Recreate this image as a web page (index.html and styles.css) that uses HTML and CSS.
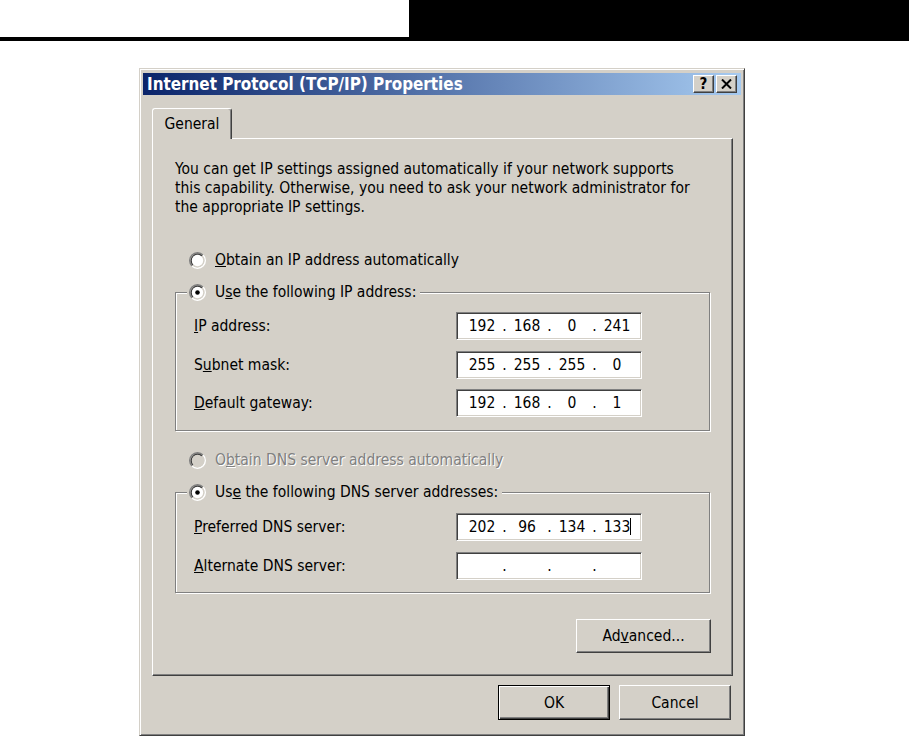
FILE: index.html
```html
<!DOCTYPE html>
<html>
<head>
<meta charset="utf-8">
<link rel="stylesheet" href="styles.css">
</head>
<body>
<div class="doc-header"><div class="doc-header-left"></div><div class="doc-header-right"></div></div>
<div class="dialog">
  <div class="titlebar">
    <span class="title">Internet Protocol (TCP/IP) Properties</span>
    <div class="caption-btns">
      <span class="cbtn help">?</span>
      <span class="cbtn close"><svg width="11" height="10" viewBox="0 0 11 10"><path d="M1 0.5L10 9.5M10 0.5L1 9.5" stroke="#000" stroke-width="2" fill="none"/></svg></span>
    </div>
  </div>
  <div class="tabs"><div class="tab">General</div></div>
  <div class="panel">
    <p class="intro">You can get IP settings assigned automatically if your network supports<br>this capability. Otherwise, you need to ask your network administrator for<br>the appropriate IP settings.</p>

    <div class="radio-row">
      <svg class="radio" viewBox="0 0 12 12"><path d="M2.11 9.89A5.5 5.5 0 0 1 9.89 2.11" fill="none" stroke="#808080"/><path d="M9.89 2.11A5.5 5.5 0 0 1 2.11 9.89" fill="none" stroke="#fff"/><path d="M2.82 9.18A4.5 4.5 0 0 1 9.18 2.82" fill="none" stroke="#404040"/><path d="M9.18 2.82A4.5 4.5 0 0 1 2.82 9.18" fill="none" stroke="#d4d0c8"/><circle cx="6" cy="6" r="4" fill="#fff"/></svg>
      <span><u>O</u>btain an IP address automatically</span>
    </div>

    <fieldset class="group group-ip">
      <legend><span class="legend-inner">
        <svg class="radio" viewBox="0 0 12 12"><path d="M2.11 9.89A5.5 5.5 0 0 1 9.89 2.11" fill="none" stroke="#808080"/><path d="M9.89 2.11A5.5 5.5 0 0 1 2.11 9.89" fill="none" stroke="#fff"/><path d="M2.82 9.18A4.5 4.5 0 0 1 9.18 2.82" fill="none" stroke="#404040"/><path d="M9.18 2.82A4.5 4.5 0 0 1 2.82 9.18" fill="none" stroke="#d4d0c8"/><circle cx="6" cy="6" r="4" fill="#fff"/><circle cx="6" cy="6" r="1.6" fill="#000"/></svg>
        <span>U<u>s</u>e the following IP address:</span>
      </span></legend>
      <div class="field-row">
        <span class="lbl"><u>I</u>P address:</span>
        <div class="ip"><span class="oct">192</span><span class="dot">.</span><span class="oct">168</span><span class="dot">.</span><span class="oct">0</span><span class="dot">.</span><span class="oct">241</span></div>
      </div>
      <div class="field-row">
        <span class="lbl">S<u>u</u>bnet mask:</span>
        <div class="ip"><span class="oct">255</span><span class="dot">.</span><span class="oct">255</span><span class="dot">.</span><span class="oct">255</span><span class="dot">.</span><span class="oct">0</span></div>
      </div>
      <div class="field-row">
        <span class="lbl"><u>D</u>efault gateway:</span>
        <div class="ip"><span class="oct">192</span><span class="dot">.</span><span class="oct">168</span><span class="dot">.</span><span class="oct">0</span><span class="dot">.</span><span class="oct">1</span></div>
      </div>
    </fieldset>

    <div class="radio-row radio-row-dns">
      <svg class="radio" viewBox="0 0 12 12"><path d="M2.11 9.89A5.5 5.5 0 0 1 9.89 2.11" fill="none" stroke="#808080"/><path d="M9.89 2.11A5.5 5.5 0 0 1 2.11 9.89" fill="none" stroke="#fff"/><path d="M2.82 9.18A4.5 4.5 0 0 1 9.18 2.82" fill="none" stroke="#404040"/><path d="M9.18 2.82A4.5 4.5 0 0 1 2.82 9.18" fill="none" stroke="#d4d0c8"/><circle cx="6" cy="6" r="4" fill="#d4d0c8"/></svg>
      <span class="disabled-text">O<u>b</u>tain DNS server address automatically</span>
    </div>

    <fieldset class="group group-dns">
      <legend><span class="legend-inner">
        <svg class="radio" viewBox="0 0 12 12"><path d="M2.11 9.89A5.5 5.5 0 0 1 9.89 2.11" fill="none" stroke="#808080"/><path d="M9.89 2.11A5.5 5.5 0 0 1 2.11 9.89" fill="none" stroke="#fff"/><path d="M2.82 9.18A4.5 4.5 0 0 1 9.18 2.82" fill="none" stroke="#404040"/><path d="M9.18 2.82A4.5 4.5 0 0 1 2.82 9.18" fill="none" stroke="#d4d0c8"/><circle cx="6" cy="6" r="4" fill="#fff"/><circle cx="6" cy="6" r="1.6" fill="#000"/></svg>
        <span>Us<u>e</u> the following DNS server addresses:</span>
      </span></legend>
      <div class="field-row">
        <span class="lbl"><u>P</u>referred DNS server:</span>
        <div class="ip"><span class="oct">202</span><span class="dot">.</span><span class="oct">96</span><span class="dot">.</span><span class="oct">134</span><span class="dot">.</span><span class="oct">133<span class="caret"></span></span></div>
      </div>
      <div class="field-row">
        <span class="lbl"><u>A</u>lternate DNS server:</span>
        <div class="ip"><span class="oct"></span><span class="dot">.</span><span class="oct"></span><span class="dot">.</span><span class="oct"></span><span class="dot">.</span><span class="oct"></span></div>
      </div>
    </fieldset>

    <div class="adv-row"><button class="btn adv">Ad<u>v</u>anced...</button></div>
  </div>
  <div class="footer">
    <button class="btn btn-default">OK</button>
    <button class="btn">Cancel</button>
  </div>
</div>
</body>
</html>
```

FILE: styles.css
```css
html, body {
  margin: 0;
  background: #fff;
  overflow: hidden;
}
body {
  font-family: "DejaVu Sans Condensed", "DejaVu Sans", sans-serif;
  font-stretch: condensed;
  font-size: 15.5px;
  color: #000;
}
.doc-header {
  display: flex;
  height: 41px;
  background: #000;
}
.doc-header-left {
  width: 409px;
  height: 37px;
  background: #fff;
}
.doc-header-right {
  flex: 1;
}
.dialog {
  margin: 27px 0 0 139px;
  width: 606px;
  height: 668px;
  box-sizing: border-box;
  background: #d4d0c8;
  border: 1px solid;
  border-color: #d4d0c8 #404040 #404040 #d4d0c8;
  box-shadow: inset 1px 1px #fff, inset -1px -1px #808080;
  padding: 4px 3px 2px 3px;
}
.titlebar {
  height: 22px;
  box-sizing: border-box;
  display: flex;
  align-items: center;
  justify-content: space-between;
  padding: 0 4px;
  background: linear-gradient(to right, #0a246a, #a6caf0);
}
.title {
  color: #fff;
  font-weight: bold;
  font-size: 16.9px;
  white-space: nowrap;
}
.caption-btns {
  display: flex;
  gap: 2px;
}
.cbtn {
  width: 21px;
  height: 18px;
  box-sizing: border-box;
  background: #d4d0c8;
  border: 1px solid;
  border-color: #fff #404040 #404040 #fff;
  box-shadow: inset -1px -1px #808080;
  display: flex;
  align-items: center;
  justify-content: center;
  font-weight: bold;
  font-size: 15px;
  line-height: 1;
}
.tabs {
  display: flex;
  margin: 13px 0 0 9px;
}
.tab {
  position: relative;
  z-index: 1;
  width: 80px;
  height: 31px;
  margin-bottom: -1px;
  box-sizing: border-box;
  background: #d4d0c8;
  border-top: 1px solid #fff;
  border-left: 1px solid #fff;
  border-right: 1px solid #404040;
  box-shadow: inset -1px 0 #808080;
  border-top-left-radius: 3px;
  border-top-right-radius: 3px;
  display: flex;
  align-items: center;
  justify-content: center;
  padding-bottom: 1px;
}
.panel {
  margin: 0 8px 0 9px;
  border: 1px solid;
  border-color: #fff #404040 #404040 #fff;
  box-shadow: inset -1px -1px #808080;
  padding: 21px 22px 22px 22px;
}
.intro {
  margin: 0;
  line-height: 19px;
  white-space: nowrap;
}
.radio-row {
  display: flex;
  align-items: center;
  height: 20px;
  margin: 33px 0 0 14px;
  white-space: nowrap;
}
.radio-row-dns {
  margin-top: 19px;
}
.radio {
  width: 17px;
  height: 17px;
  margin-right: 9px;
  flex: none;
  display: block;
}
.group {
  margin: 12px 0 0;
  padding: 10px 0 13px 11px;
  border: 1px solid #808080;
  box-shadow: 1px 1px #fff, inset 1px 1px #fff;
  min-width: 0;
}
.group-dns {
  padding-top: 11px;
  padding-bottom: 12px;
}
.group legend {
  padding: 0 4px 0 2px;
  background: #d4d0c8;
}
.legend-inner {
  display: flex;
  align-items: center;
  height: 20px;
  white-space: nowrap;
}
.field-row {
  display: flex;
  align-items: center;
  height: 28px;
  padding-left: 7px;
}
.field-row + .field-row {
  margin-top: 10.5px;
}
.group-dns .field-row + .field-row {
  margin-top: 11px;
}
.lbl {
  width: 262px;
  flex: none;
  white-space: nowrap;
}
.ip {
  width: 186px;
  height: 28px;
  box-sizing: border-box;
  background: #fff;
  border: 1px solid;
  border-color: #808080 #fff #fff #808080;
  box-shadow: inset 1px 1px #404040, inset -1px -1px #d4d0c8;
  display: flex;
  align-items: center;
  padding-left: 6px;
}
.oct {
  width: 38px;
  text-align: center;
  flex: none;
  white-space: nowrap;
}
.dot {
  width: 7px;
  text-align: center;
  flex: none;
}
.caret {
  display: inline-block;
  width: 1px;
  height: 17px;
  margin-right: -1px;
  background: #000;
  vertical-align: -3px;
}
.disabled-text {
  color: #808080;
  text-shadow: 1px 1px #fff;
}
.adv-row {
  display: flex;
  justify-content: flex-end;
  margin: 26px -1px 0 0;
}
.btn {
  font: inherit;
  color: #000;
  background: #d4d0c8;
  border: 1px solid;
  border-color: #fff #404040 #404040 #fff;
  box-shadow: inset -1px -1px #808080;
  padding: 0;
  margin: 0;
}
.adv {
  width: 135px;
  height: 34px;
}
.footer {
  display: flex;
  justify-content: flex-end;
  gap: 9px;
  margin: 9px 10px 0 0;
}
.footer .btn {
  width: 112px;
  height: 35px;
}
.btn-default {
  border-color: #000;
  box-shadow: inset 1px 1px #fff, inset -1px -1px #404040, inset -2px -2px #808080;
}
```
